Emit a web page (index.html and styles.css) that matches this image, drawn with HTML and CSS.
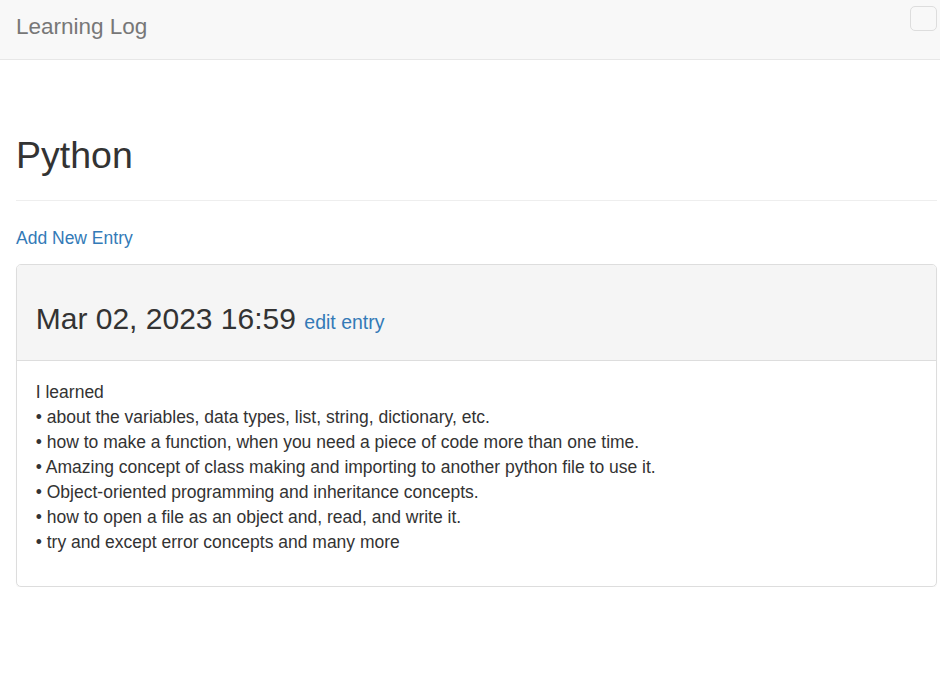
FILE: index.html
```html
<!DOCTYPE html>
<html lang="en">
<head>
<meta charset="utf-8">
<title>Learning Log</title>
<link rel="stylesheet" href="styles.css">
</head>
<body>
<nav class="navbar">
  <a class="brand" href="#">Learning Log</a>
  <button class="toggle" type="button" aria-label="Toggle navigation"></button>
</nav>
<main class="container">
  <div class="page-header">
    <h2 class="title">Python</h2>
  </div>
  <p class="add"><a href="#">Add New Entry</a></p>
  <div class="panel">
    <div class="panel-heading">
      <h3 class="entry-date">Mar 02, 2023 16:59 <small><a href="#">edit entry</a></small></h3>
    </div>
    <div class="panel-body">
      <p class="entry-text">I learned<br>• about the variables, data types, list, string, dictionary, etc.<br>• how to make a function, when you need a piece of code more than one time.<br>• Amazing concept of class making and importing to another python file to use it.<br>• Object-oriented programming and inheritance concepts.<br>• how to open a file as an object and, read, and write it.<br>• try and except error concepts and many more</p>
    </div>
  </div>
</main>
</body>
</html>
```
FILE: styles.css
```css
* { box-sizing: border-box; }
html, body { margin: 0; padding: 0; }
body {
  font-family: "Liberation Sans", Arial, Helvetica, sans-serif;
  font-size: 17.5px;
  line-height: 25px;
  color: #333;
  background: #fff;
}
a { color: #337ab7; text-decoration: none; }

.navbar {
  display: flex;
  justify-content: space-between;
  align-items: flex-start;
  height: 60px;
  background: #f8f8f8;
  border-bottom: 1px solid #e7e7e7;
}
.brand {
  padding-left: 16px;
  font-size: 22.5px;
  line-height: 54px;
  color: #777;
}
.toggle {
  margin: 6px 3px 0 0;
  width: 27px;
  height: 25px;
  padding: 0;
  background: transparent;
  border: 1px solid #ddd;
  border-radius: 5px;
}

.container {
  padding: 0 3px 0 16px;
}
.page-header {
  display: flow-root;
  margin: 50px 0 25px;
  padding-bottom: 11.25px;
  border-bottom: 1px solid #eee;
}
.title {
  margin: 25px 0 12.5px;
  font-size: 37.5px;
  font-weight: 500;
  line-height: 1.1;
}
.add { margin: 0 0 12.5px; }

.panel {
  border: 1px solid #ddd;
  border-radius: 5px;
  box-shadow: 0 1px 1px rgba(0,0,0,.05);
}
.panel-heading {
  padding: 12.5px 18.75px;
  background: #f5f5f5;
  border-bottom: 1px solid #ddd;
  border-radius: 4px 4px 0 0;
}
.entry-date {
  margin: 25px 0 12.5px;
  font-size: 30px;
  font-weight: 500;
  line-height: 1.1;
}
.entry-date small { font-size: 65%; font-weight: 400; }
.panel-body { padding: 18.75px; }
.entry-text { margin: 0 0 12.5px; }
```
